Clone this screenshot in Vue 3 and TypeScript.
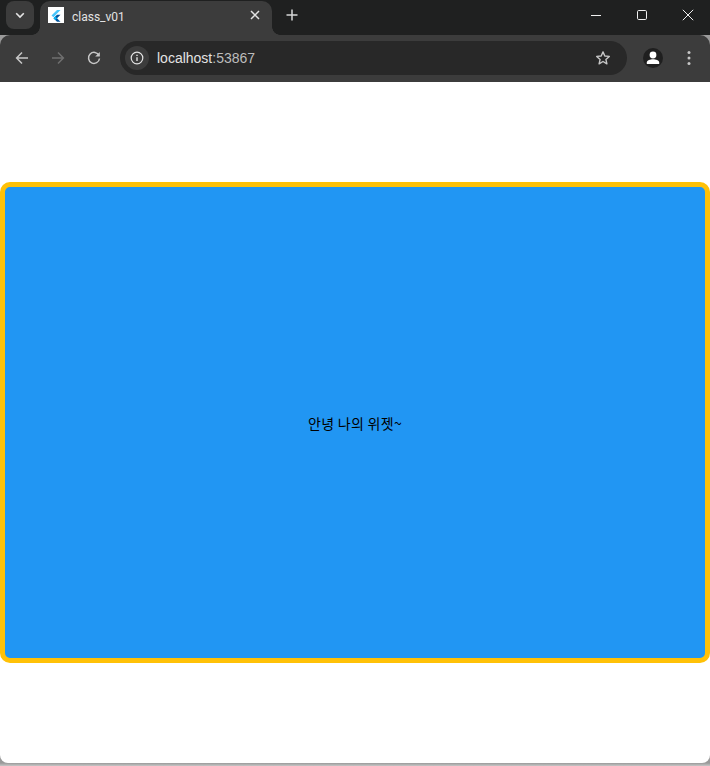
<script setup lang="ts">
const title = 'class_v01'
const host = 'localhost'
const port = ':53867'
const message = '안녕 나의 위젯~'
</script>

<template>
  <div class="window">
    <div class="titlebar">
      <button class="tab-search">
        <svg width="12" height="12" viewBox="0 0 12 12"><path d="M2.200 4.200 6 8l3.800-3.800" fill="none" stroke="#e3e3e3" stroke-width="1.600" /></svg>
      </button>
      <div class="tab">
        <span class="favicon">
          <svg width="16" height="16" viewBox="0 0 16 16">
            <path d="M9 1.500h3.500L5.400 8.700 3.500 6.800z" fill="#47c5fb" transform="translate(0 1.600)" />
            <path d="M9 7.700h3.500L9 11.200l3.500 3.500H9L5.500 11.200z" fill="#00569e" />
            <path d="M5.500 11.200 7.200 9.500 9 11.200l-1.800 1.800z" fill="#00b5f8" />
          </svg>
        </span>
        <span class="tab-title">{{ title }}</span>
        <svg class="tab-close" width="10" height="10" viewBox="0 0 10 10"><path d="M1 1l8 8M9 1 1 9" stroke="#e3e3e3" stroke-width="1.500" /></svg>
      </div>
      <svg class="new-tab" width="12" height="12" viewBox="0 0 12 12"><path d="M6 .5v11M.5 6h11" stroke="#d6d6d6" stroke-width="1.500" /></svg>
      <div class="window-controls">
        <svg width="12" height="12" viewBox="0 0 12 12"><path d="M1 6.500h10" stroke="#f0f0f0" /></svg>
        <svg width="12" height="12" viewBox="0 0 12 12"><rect x="1.500" y="1.500" width="9" height="9" rx="1.200" fill="none" stroke="#f0f0f0" /></svg>
        <svg width="12" height="12" viewBox="0 0 12 12"><path d="M.8.8l10.400 10.400M11.200.8.8 11.200" stroke="#f0f0f0" /></svg>
      </div>
    </div>

    <div class="toolbar">
      <svg class="nav" width="14" height="14" viewBox="0 0 14 14"><path d="M13 7H2M7 1.500 1.600 7 7 12.500" fill="none" stroke="#c7c7c7" stroke-width="1.500" /></svg>
      <svg class="nav" width="14" height="14" viewBox="0 0 14 14"><path d="M1 7h11M7 1.500 12.400 7 7 12.500" fill="none" stroke="#6f6f6f" stroke-width="1.500" /></svg>
      <svg class="nav" width="14" height="14" viewBox="0 0 14 14"><path d="M12 4.500A5.500 5.500 0 1 0 12.500 7.500" fill="none" stroke="#c7c7c7" stroke-width="1.500" /><path d="M12.800.9v4.600H8.200z" fill="#c7c7c7" /></svg>
      <div class="omnibox">
        <span class="info">
          <svg width="14" height="14" viewBox="0 0 14 14"><circle cx="7" cy="7" r="5.800" fill="none" stroke="#e3e3e3" stroke-width="1.200" /><path d="M7 6.200v3.900" stroke="#e3e3e3" stroke-width="1.400" /><path d="M7 3.700v1.400" stroke="#e3e3e3" stroke-width="1.400" /></svg>
        </span>
        <span class="host">{{ host }}</span><span class="port">{{ port }}</span>
        <svg class="star" width="16" height="16" viewBox="0 0 16 16"><path d="M8 1.900l1.800 4.100 4.500.4-3.400 3 1 4.400L8 11.500l-3.900 2.300 1-4.400-3.400-3 4.500-.4z" fill="none" stroke="#c7c7c7" stroke-width="1.400" stroke-linejoin="round" /></svg>
      </div>
      <span class="avatar">
        <svg width="20" height="20" viewBox="0 0 20 20"><circle cx="10" cy="7" r="3.400" fill="#fff" /><path d="M3.800 16v-1.600c0-2 3.600-3.100 6.200-3.100s6.200 1.100 6.200 3.100V16z" fill="#fff" /></svg>
      </span>
      <svg class="menu" width="4" height="16" viewBox="0 0 4 16"><circle cx="2" cy="2.500" r="1.500" fill="#c7c7c7" /><circle cx="2" cy="8" r="1.500" fill="#c7c7c7" /><circle cx="2" cy="13.500" r="1.500" fill="#c7c7c7" /></svg>
    </div>

    <main class="page">
      <div class="box">{{ message }}</div>
    </main>
  </div>
</template>

<style scoped>
.window {
  display: flex;
  flex-direction: column;
  height: 766px;
  width: 710px;
  font-family: "Liberation Sans", Arial, sans-serif;
  overflow: hidden;
  background: linear-gradient(to bottom, #9a9a9a 763px, #c6c6c6 766px);
}
.titlebar {
  display: flex;
  align-items: center;
  height: 35px;
  background: #1f2020;
  flex: none;
}
.tab-search {
  width: 28px;
  height: 28px;
  margin: 1px 0 0 6px;
  padding: 0;
  border: 0;
  border-radius: 8px;
  background: #3c3c3c;
  display: flex;
  align-items: center;
  justify-content: center;
  align-self: flex-start;
  flex: none;
}
.tab {
  position: relative;
  display: flex;
  align-items: center;
  width: 232px;
  height: 34px;
  margin: 1px 0 0 6px;
  padding: 0 12px 2px 8px;
  box-sizing: border-box;
  background: #3c3c3c;
  border-radius: 10px 10px 0 0;
  flex: none;
}
.tab::before,
.tab::after {
  content: "";
  position: absolute;
  bottom: 0;
  width: 8px;
  height: 8px;
}
.tab::before {
  left: -8px;
  background: radial-gradient(circle at 0 0, #1f2020 7.5px, #3c3c3c 8px);
}
.tab::after {
  right: -8px;
  background: radial-gradient(circle at 100% 0, #1f2020 7.5px, #3c3c3c 8px);
}
.favicon {
  width: 16px;
  height: 16px;
  margin-bottom: 4px;
  background: #fff;
  display: flex;
  flex: none;
}
.tab-title {
  margin-left: 8px;
  font-family: Roboto, "Liberation Sans", sans-serif;
  font-size: 12px;
  color: #e3e3e3;
  flex: 1;
}
.tab-close {
  margin-bottom: 4px;
}
.new-tab {
  margin: 0 0 5px 14px;
}
.window-controls {
  margin-left: auto;
  display: flex;
  align-items: center;
  gap: 34px;
  padding: 0 16px 5px 0;
}
.toolbar {
  display: flex;
  align-items: center;
  height: 47px;
  background: #3c3c3c;
  border-radius: 10px 10px 0 0;
  flex: none;
  box-sizing: border-box;
  padding: 0 15px 1px 15px;
}
.nav {
  margin-right: 22px;
  flex: none;
}
.nav:nth-child(3) {
  margin-right: 19px;
}
.omnibox {
  display: flex;
  align-items: center;
  width: 507px;
  height: 34px;
  box-sizing: border-box;
  padding: 0 16px 0 5px;
  background: #282828;
  border-radius: 17px;
  font-size: 14px;
  flex: none;
}
.info {
  width: 24px;
  height: 24px;
  border-radius: 50%;
  background: #3c3c3c;
  display: flex;
  align-items: center;
  justify-content: center;
  margin-right: 8px;
}
.host {
  color: #e3e3e3;
}
.port {
  color: #bdbdbd;
}
.star {
  margin-left: auto;
}
.avatar {
  width: 20px;
  height: 20px;
  margin-left: 16px;
  border-radius: 50%;
  background: #1f1f1f;
  display: flex;
  flex: none;
}
.menu {
  margin-left: 24px;
  flex: none;
}
.page {
  height: 681px;
  flex: none;
  background: #fff;
  border-radius: 0 0 8px 8px;
  display: flex;
  align-items: center;
}
.box {
  width: 100%;
  height: 481px;
  box-sizing: border-box;
  border: 5px solid #ffc107;
  border-radius: 10px;
  background: #2196f3;
  display: flex;
  align-items: center;
  justify-content: center;
  color: #000;
  font-size: 14px;
  letter-spacing: 0.3px;
  font-family: "Noto Sans CJK KR", sans-serif;
}
</style>

<style>
body {
  margin: 0;
}
</style>
